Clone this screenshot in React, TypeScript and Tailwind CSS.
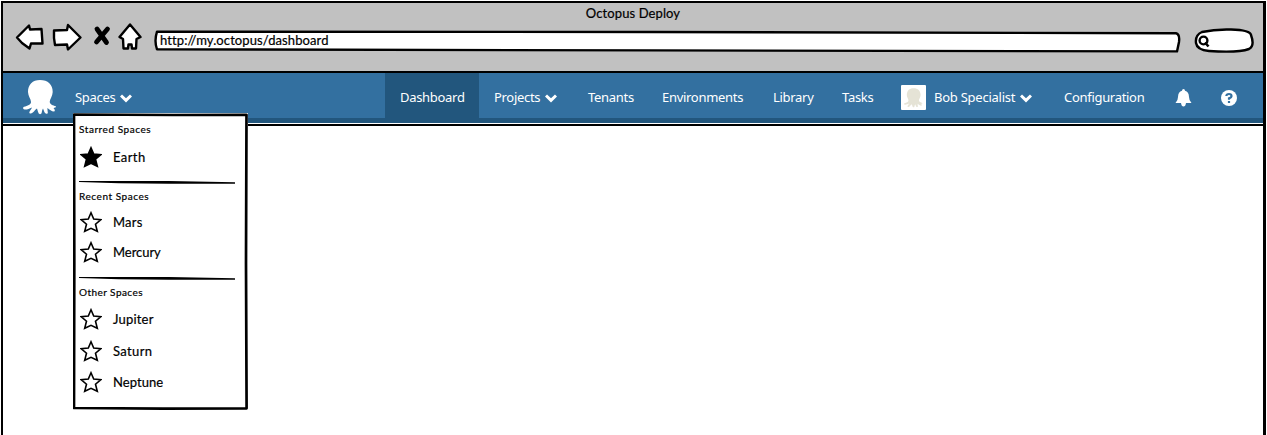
import React from "react";

const OCTO =
  "M17 0C9.500 0 5 4.500 5 12C5 16 8 19 8 22C8 24.500 4.500 26 1 26.800C-.5 27.500 0 29.500 1.500 29.500C4 29.800 6 28.800 9 27.500C8.500 29.500 6.500 30.500 6.300 32.500C6.500 34 8.500 33.500 9.800 32.500C11.500 31 12.500 29.500 14 28.500C14.500 30.500 15 31.500 15.500 33C16 34.500 18.200 34.500 18.600 33C19 31.500 19 30 20 28.500C20.800 30 21 31.500 22 33C23 34.300 25 34 24.800 32.500C24.700 31 24.300 29.500 24.500 28C26.500 29.500 28.500 31.500 31 31.500C32.300 31.300 32 29.500 30.500 28C32 27.800 33.500 27.500 32.800 26.300C30 25.300 27 24.500 26.700 22C26.700 19 29.700 16 29.700 12C29.700 4.500 25 0 17 0Z";

function Octopus({ className }: { className: string }) {
  return (
    <svg viewBox="0 0 34 35" className={className} fill="currentColor">
      <path d={OCTO} />
    </svg>
  );
}

function Chevron() {
  return (
    <svg viewBox="0 0 12 9" className="mt-[2px] h-[9px] w-[12px] shrink-0" fill="none" stroke="currentColor" strokeWidth="3">
      <path d="M1 1.500L6 6.300L11 1.500" />
    </svg>
  );
}

function Star({ filled }: { filled?: boolean }) {
  return (
    <svg viewBox="0 0 22 22" className="h-[22px] w-[22px] shrink-0" fill={filled ? "#000" : "#fff"} stroke="#000" strokeWidth="1.600">
      <path d="M11 1.800L13.700 8L21 8.600L15.500 13.200L17.300 20.200L11 17.300L4.700 20.200L6.500 13.200L1 8.600L8.300 8Z" />
    </svg>
  );
}

function Space({ name, tracking, filled, className }: { name: string; tracking: string; filled?: boolean; className: string }) {
  return (
    <div className={`flex h-[22px] items-center gap-[11px] pl-[7px] ${className}`}>
      <Star filled={filled} />
      <span className={`text-[13px] leading-[22px] ${tracking}`}>{name}</span>
    </div>
  );
}

function Heading({ children, className }: { children: string; className: string }) {
  return <div className={`ml-[6px] h-[14px] text-[10px] leading-[14px] ${className}`}>{children}</div>;
}

function Divider({ className }: { className: string }) {
  return (
    <svg viewBox="0 0 156 3" className={`ml-[6px] block h-[3px] w-[156px] ${className}`}>
      <path d="M0 0L90 .1L156 1.200V2.800L90 2.700L40 2.200L0 1Z" />
    </svg>
  );
}

function SpacesMenu() {
  return (
    <div className="absolute left-[70px] top-[40px] h-[297px] w-[175px] bg-white pt-[9px] font-['Lato','Noto_Sans',sans-serif] leading-none tracking-normal text-black [-webkit-text-stroke:0.2px_black]">
      <svg viewBox="0 0 175 297" className="absolute inset-0 h-full w-full" fill="none" stroke="#000" strokeLinejoin="round">
        <path d="M1 1.500L100 2L173.500 1.800L173 150L173.600 295.300L90 295.600L1 295L1.300 150Z" strokeWidth="2.700" />
      </svg>
      <div className="relative">
        <Heading className="tracking-[0.55px]">Starred Spaces</Heading>
        <Space name="Earth" tracking="tracking-[0.4px]" filled className="mt-[10px]" />
        <Divider className="mt-[13px]" />
        <Heading className="mt-[5px] tracking-[0.55px]">Recent Spaces</Heading>
        <Space name="Mars" tracking="tracking-[0.2px]" className="mt-[8px]" />
        <Space name="Mercury" tracking="tracking-[-0.05px]" className="mt-[8px]" />
        <Divider className="mt-[14px]" />
        <Heading className="mt-[5px] tracking-[0.45px]">Other Spaces</Heading>
        <Space name="Jupiter" tracking="tracking-[0.2px]" className="mt-[9px]" />
        <Space name="Saturn" tracking="tracking-[0.35px]" className="mt-[10px]" />
        <Space name="Neptune" tracking="tracking-[0.05px]" className="mt-[9px]" />
      </div>
    </div>
  );
}

function BrowserBar() {
  return (
    <div className="h-[68px] bg-[#c1c1c1] font-['Lato','Noto_Sans',sans-serif] text-[13px] text-black [-webkit-text-stroke:0.2px_black]">
      <div className="h-[20px] text-center leading-[20px] tracking-[0.1px]">Octopus Deploy</div>
      <div className="flex h-[34px]">
        <svg viewBox="0 0 130 34" className="ml-[11px] h-[34px] w-[130px] shrink-0" fill="#fff" stroke="#000" strokeWidth="2.400" strokeLinejoin="round" strokeLinecap="round">
          <path d="M3 14.500L15 2.500L16 6.500L27.500 6L28.500 20.500L17 20.500L15.500 25.500L8 20Z" />
          <path d="M40 7.500L53 7L54 2L66.500 14.500L54 26.500L53 21.500L41 22Q39.500 15 40 7.500Z" />
          <path d="M83 6L92.500 19.500M93.500 6L82.500 19" strokeWidth="4.800" />
          <path d="M116 1.500L126.500 14L122.500 16L122 25.500L118 25.500L117.500 21.500L114.500 21.500L114 25.500L109.500 25.500L109 16L105.500 14Z" />
        </svg>
        <div className="relative ml-[8px] mt-[6px] h-[22px] w-[1029px] shrink-0">
          <svg viewBox="0 0 1029 22" className="absolute inset-0 h-full w-full overflow-visible" fill="#fff" stroke="#000" strokeWidth="2.400" strokeLinejoin="round">
            <path d="M5 2.600L500 3L1024 4.200Q1028 5 1027 13L1025 22.400L500 21.400L5 20.300Q2 12 5 2.600Z" />
          </svg>
          <span className="relative block pl-[8px] leading-[22px] tracking-[0.1px]">http://my.octopus/dashboard</span>
        </div>
        <svg viewBox="0 0 62 28" className="ml-[12px] mt-[4px] h-[28px] w-[62px] shrink-0" fill="#fff" stroke="#000" strokeWidth="2.400">
          <path d="M9 5Q22 2 38 2.500Q57 3 58 8Q62 19 56 22Q45 26 16 24Q4 23 3 16Q2 8 9 5Z" />
          <circle cx="10.500" cy="13.500" r="3.900" />
          <path d="M12 15.500L15.500 19.500" strokeWidth="2.600" />
        </svg>
      </div>
    </div>
  );
}

export default function App() {
  return (
    <div className="h-[435px] w-[1267px] overflow-hidden bg-white pl-px pt-px">
      <div className="h-[440px] w-[1265px] border-2 border-r-[3px] border-black">
        <BrowserBar />
        <div className="h-[2px] bg-black" />
        <nav className="relative flex h-[50px] items-stretch border-b-[5px] border-[#22567d] bg-[#3370a0] font-['Noto_Sans',sans-serif] text-[13px] leading-[48px] tracking-[-0.3px] text-white">
          <Octopus className="ml-[20px] mt-[7px] h-[35px] w-[34px] shrink-0" />
          <div className="ml-[18px] flex h-[48px] w-[310px] shrink-0 items-center gap-[5px]"><span>Spaces</span><Chevron /></div>
          <div className="w-[94px] shrink-0 bg-[#22567d] pl-[15px]">Dashboard</div>
          <div className="flex h-[48px] w-[94px] shrink-0 items-center gap-[5px] pl-[15px]"><span>Projects</span><Chevron /></div>
          <div className="w-[74px] shrink-0 pl-[15px]">Tenants</div>
          <div className="w-[111px] shrink-0 pl-[15px]">Environments</div>
          <div className="w-[69px] shrink-0 pl-[15px]">Library</div>
          <div className="w-[74px] shrink-0 pl-[15px]">Tasks</div>
          <div className="mt-[12px] flex h-[25px] w-[25px] shrink-0 items-center justify-center rounded-[1px] bg-white text-[#e5e3d6]"><Octopus className="h-[20px] w-[19px]" /></div>
          <div className="ml-[8px] flex h-[48px] w-[130px] shrink-0 items-center gap-[5px] whitespace-nowrap tracking-[-0.25px]"><span>Bob Specialist</span><Chevron /></div>
          <div className="w-[111px] shrink-0">Configuration</div>
          <svg viewBox="0 0 16 18" className="mt-[16px] h-[18px] w-[17px] shrink-0" fill="currentColor"><path d="M8 0Q9.500 0 9.500 1.800Q13.300 2.800 13.500 8Q13.500 11.500 16 14H0Q2.500 11.500 2.500 8Q2.700 2.800 6.500 1.800Q6.500 0 8 0ZM5.500 14H10.500Q10 17.500 8 17.500Q6 17.500 5.500 14Z" /></svg>
          <svg viewBox="0 0 16 16" className="ml-[29px] mt-[17px] h-[16px] w-[16px] shrink-0"><circle cx="8" cy="8" r="8" fill="#fff" /><path d="M5.300 6Q5.500 4 8 4Q10.500 4 10.500 6Q10.500 7.500 8 8.300V9.700M8 11V13" fill="none" stroke="#3370a0" strokeWidth="2.200" /></svg>
          <SpacesMenu />
        </nav>
        <div className="mt-px h-[2px] bg-black" />
      </div>
    </div>
  );
}
